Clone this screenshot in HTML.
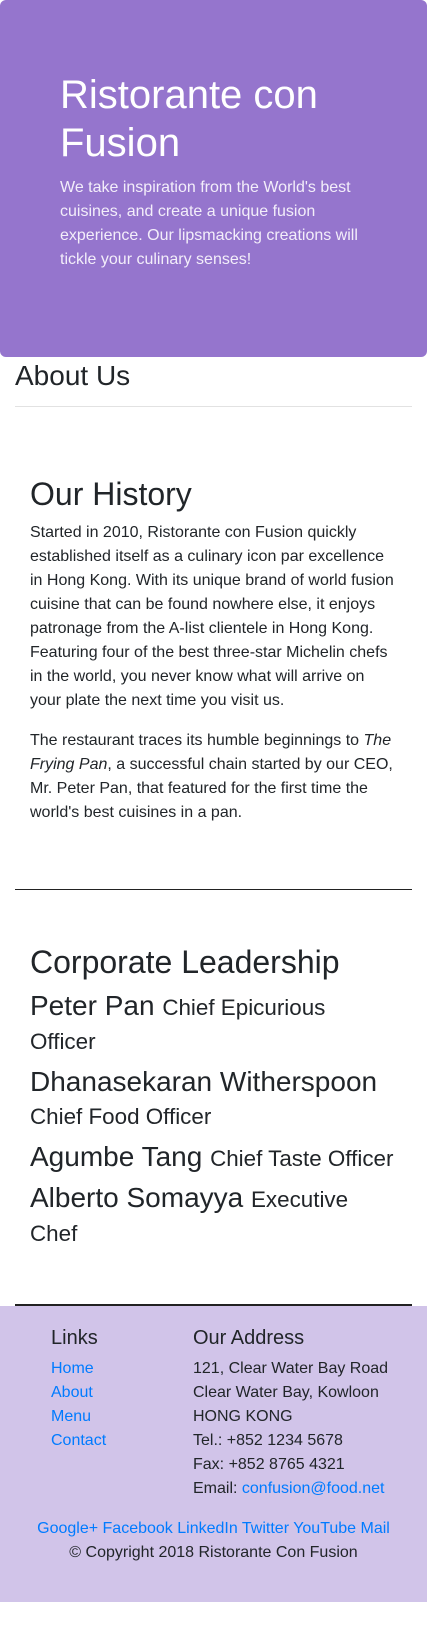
<!DOCTYPE html>
<html><head><meta charset="utf-8"><style>
*{margin:0;padding:0;box-sizing:border-box}
body{width:427px;height:1635px;position:relative;background:#fff;font-family:"Liberation Sans",sans-serif;color:#212529;overflow:hidden}
.a{position:absolute}
.jum{left:0;top:0;width:427px;height:357px;background:#9575cd;border-radius:6px;color:#fff}
h1{font-weight:400;font-size:40px;line-height:48px}
p{font-size:16px;line-height:24px}
h2{font-weight:400;font-size:32px;line-height:38.4px}
h3{font-weight:400;font-size:28px;line-height:33.6px;margin-bottom:8px}
h3 small{font-size:80%;line-height:1}
a{color:#007bff;text-decoration:none}
.ft{left:0;top:1306px;width:427px;height:296px;background:#d1c4e9}
</style></head><body>
<div class="a jum">
 <h1 class="a" style="left:60px;top:71px;width:340px">Ristorante con Fusion</h1>
 <p class="a" style="left:60px;top:176px;width:320px;color:#f3eefa">We take inspiration from the World's best cuisines, and create a unique fusion experience. Our lipsmacking creations will tickle your culinary senses!</p>
</div>
<div class="a" style="left:15px;top:359px;font-size:28px;line-height:33.6px">About Us</div>
<div class="a" style="left:15px;top:406px;width:397px;height:1px;background:#e2e2e2"></div>
<h2 class="a" style="left:30px;top:475px">Our History</h2>
<div class="a" style="left:30px;top:521px;width:365px">
<p style="margin-bottom:16px">Started in 2010, Ristorante con Fusion quickly established itself as a culinary icon par excellence in Hong Kong. With its unique brand of world fusion cuisine that can be found nowhere else, it enjoys patronage from the A-list clientele in Hong Kong. Featuring four of the best three-star Michelin chefs in the world, you never know what will arrive on your plate the next time you visit us.</p>
<p>The restaurant traces its humble beginnings to <em>The Frying Pan</em>, a successful chain started by our CEO, Mr. Peter Pan, that featured for the first time the world's best cuisines in a pan.</p>
</div>
<div class="a" style="left:15px;top:889px;width:397px;height:1px;background:#222"></div>
<div class="a" style="left:30px;top:943px;width:365px">
<h2 style="margin-bottom:8px">Corporate Leadership</h2>
<h3>Peter Pan <small>Chief Epicurious<br>Officer</small></h3>
<h3>Dhanasekaran Witherspoon <small>Chief Food Officer</small></h3>
<h3>Agumbe Tang <small>Chief Taste Officer</small></h3>
<h3>Alberto Somayya <small>Executive Chef</small></h3>
</div>
<div class="a ft">
 <div class="a" style="left:51px;top:20px;font-size:20px;line-height:24px">Links</div>
 <div class="a" style="left:51px;top:51px;font-size:16px;line-height:24px"><a>Home</a><br><a>About</a><br><a>Menu</a><br><a>Contact</a></div>
 <div class="a" style="left:193px;top:20px;font-size:20px;line-height:24px">Our Address</div>
 <div class="a" style="left:193px;top:51px;font-size:16px;line-height:24px;white-space:nowrap">121, Clear Water Bay Road<br>Clear Water Bay, Kowloon<br>HONG KONG<br>Tel.: +852 1234 5678<br>Fax: +852 8765 4321<br>Email: <a>confusion@food.net</a></div>
 <div class="a" style="left:0;top:211px;width:427px;text-align:center;font-size:16px;line-height:24px"><a>Google+</a> <a>Facebook</a> <a>LinkedIn</a> <a>Twitter</a> <a>YouTube</a> <a>Mail</a></div>
 <div class="a" style="left:0;top:235px;width:427px;text-align:center;font-size:16px;line-height:24px">© Copyright 2018 Ristorante Con Fusion</div>
</div>
<div class="a" style="left:15px;top:1304px;width:397px;height:2px;background:#222"></div>
</body></html>
